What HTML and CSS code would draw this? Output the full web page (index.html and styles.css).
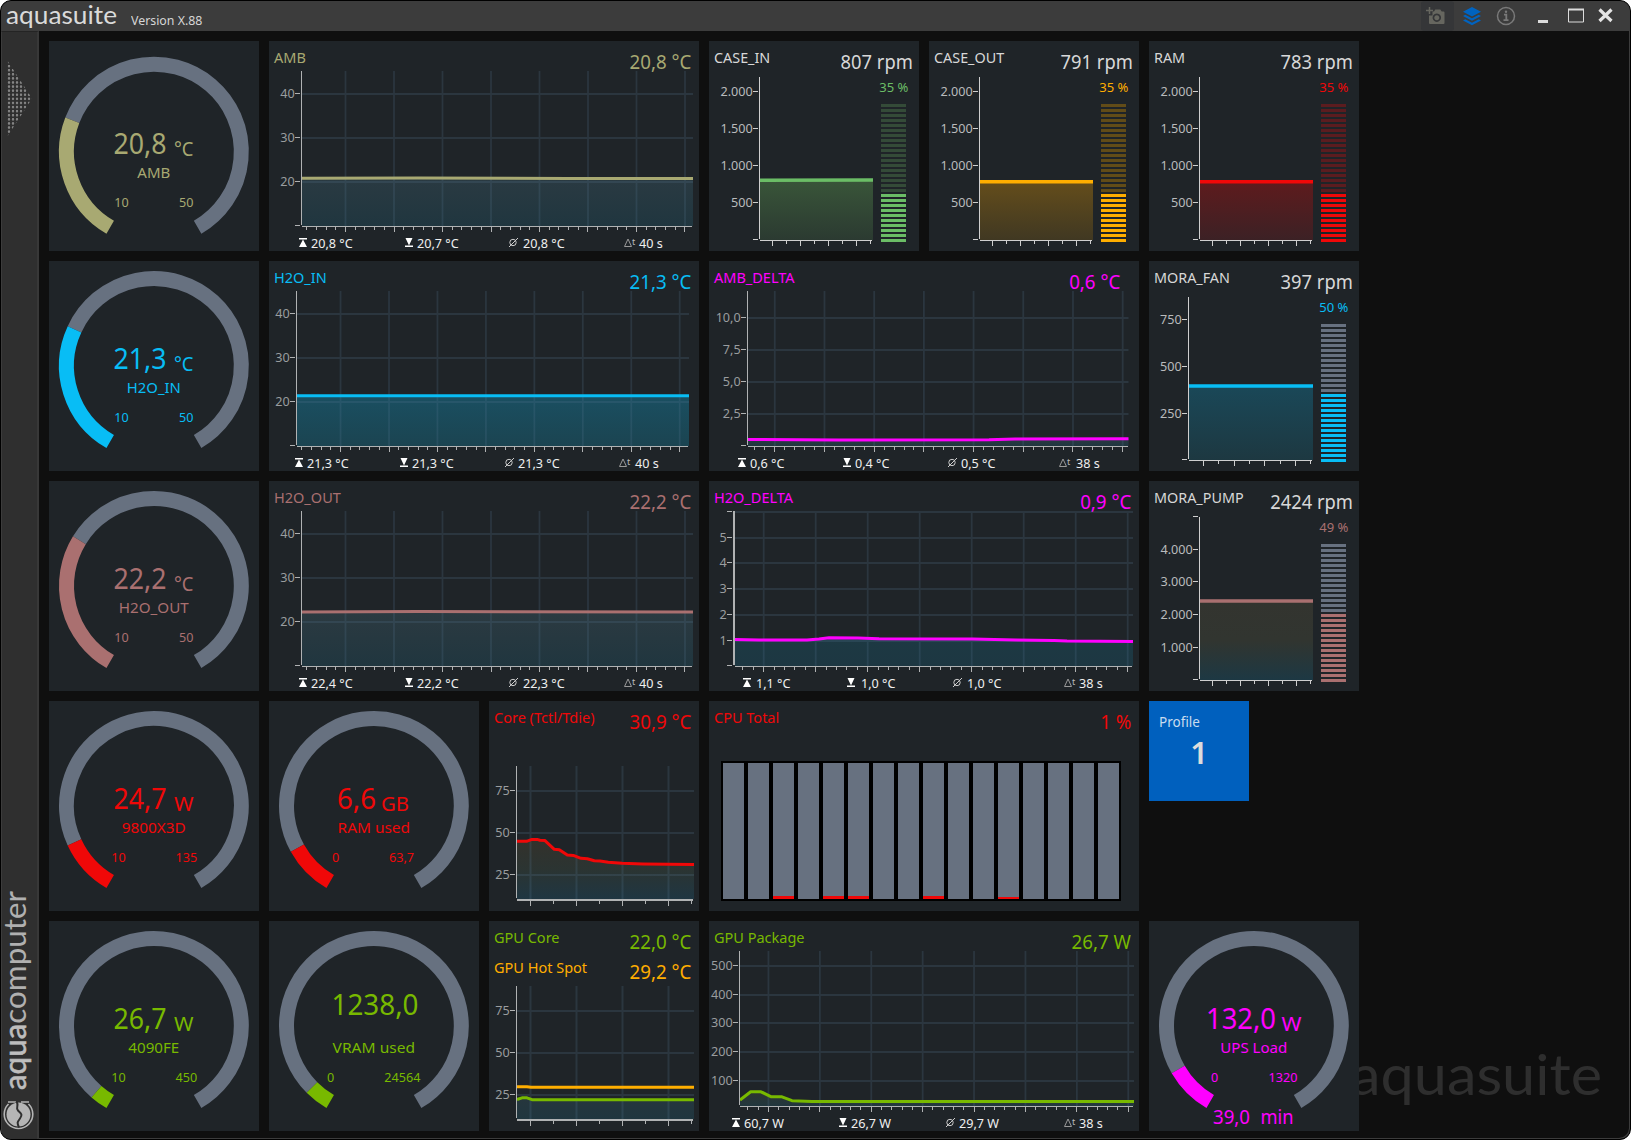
FILE: index.html
```html
<!DOCTYPE html>
<html lang="de">
<head>
    <meta charset="UTF-8">
    <meta name="viewport" content="width=device-width, initial-scale=1.0">
    <title>aquasuite</title>
    <link rel="stylesheet" href="styles.css">
</head>
<body>
    <div class="window">
        <header class="titlebar">
            <svg class="brand" width="118" height="30"><text x="5" y="22.5" textLength="111" lengthAdjust="spacingAndGlyphs">aquasuite</text></svg>
            <span class="version">Version X.88</span>
            <div class="tools">
                <span class="tool tool-active">
                    <svg width="20" height="18" viewBox="0 0 20 18"><path fill="#66665f" fill-rule="evenodd" d="M8 4.5 9.3 2.6h5L15.7 4.5H17.5a1 1 0 0 1 1 1V16a1 1 0 0 1-1 1H4a1 1 0 0 1-1-1V8.500H6.500V4.500ZM10.800 6.500a4.200 4.200 0 1 0 .01 0Zm0 1.700a2.500 2.500 0 1 1-.01 0Z"/><path stroke="#66665f" stroke-width="1.500" d="M3.500 0v7M0 3.500h7"/></svg>
                </span>
                <span class="tool">
                    <svg width="18" height="19" viewBox="0 0 18 19"><path fill="#0063c0" d="M9 0 18 4.700 9 9.400 0 4.700ZM0 9l2.300-1.200L9 11.300l6.700-3.500L18 9l-9 4.700ZM0 13.400l2.300-1.200L9 15.700l6.700-3.500L18 13.400 9 18.200Z"/></svg>
                </span>
                <span class="tool">
                    <svg width="20" height="20" viewBox="0 0 20 20"><circle cx="10" cy="10" r="8.500" fill="none" stroke="#797979" stroke-width="1.500"/><path fill="none" stroke="#797979" stroke-width="1.800" d="M8 8.600h2.300V14M7.500 14.200h5"/><circle cx="10" cy="5.700" r="1.200" fill="#797979"/></svg>
                </span>
                <span class="win-btn"><svg width="10" height="15"><rect y="12" width="10" height="3" fill="#dcdcdc"/></svg></span>
                <span class="win-btn"><svg width="16" height="15"><path fill="none" stroke="#dcdcdc" d="M.5 1.500h15v12.500H.5Z"/><path stroke="#dcdcdc" stroke-width="2" d="M0 1.500h16"/></svg></span>
                <span class="win-btn"><svg width="15" height="15"><path stroke="#e4e4e4" stroke-width="3.200" d="m1.500 1.500 12 11.500M13.500 1.500l-12 11.500"/></svg></span>
            </div>
        </header>

        <div class="main">
            <aside class="sidebar">
                <div class="handle"></div>
                <svg class="maker" width="35" height="248" viewBox="0 0 35 248">
                    <text transform="translate(23.500,199) rotate(-90)" textLength="199" lengthAdjust="spacingAndGlyphs"><tspan class="maker-bold">aqua</tspan>computer</text>
                    <circle cx="16.500" cy="223.500" r="12" fill="#b5b5b5"/>
                    <path fill="none" stroke="#b5b5b5" stroke-width="1.600" d="M6.500 213a14.300 14.300 0 1 0 20 0M6 211h8M19 211h8"/>
                    <path fill="none" stroke="#2f2f2f" stroke-width="2" d="M14 210.500c4 3-1 6 2 9s5 4 2 8-3 4-1 9"/>
                </svg>
            </aside>

            <main class="desk">
                <div class="watermark"><svg width="256" height="80"><text x="2" y="56" textLength="251" lengthAdjust="spacingAndGlyphs">aquasuite</text></svg></div>
                <div class="grid">
                    <section class="tile" data-gauge="amb"></section>
                    <section class="tile wide olive" data-chart="amb">
                        <div class="head"><span class="name">AMB</span><span class="value">20,8 °C</span></div>
                    </section>
                    <section class="tile green fan" data-chart="caseIn">
                        <div class="head"><span class="name">CASE_IN</span><span class="value">807 rpm</span></div>
                        <div class="power"><span class="percent">35 %</span><div class="bar dim"><div class="bar-fill" data-segments="10"></div></div></div>
                    </section>
                    <section class="tile orange fan" data-chart="caseOut">
                        <div class="head"><span class="name">CASE_OUT</span><span class="value">791 rpm</span></div>
                        <div class="power"><span class="percent">35 %</span><div class="bar dim"><div class="bar-fill" data-segments="10"></div></div></div>
                    </section>
                    <section class="tile red fan" data-chart="ram">
                        <div class="head"><span class="name">RAM</span><span class="value">783 rpm</span></div>
                        <div class="power"><span class="percent">35 %</span><div class="bar dim"><div class="bar-fill" data-segments="10"></div></div></div>
                    </section>

                    <section class="tile" data-gauge="h2oIn"></section>
                    <section class="tile wide cyan" data-chart="h2oIn">
                        <div class="head"><span class="name">H2O_IN</span><span class="value">21,3 °C</span></div>
                    </section>
                    <section class="tile wide magenta" data-chart="ambDelta">
                        <div class="head head-inset"><span class="name">AMB_DELTA</span><span class="value">0,6 °C</span></div>
                    </section>
                    <section class="tile cyan fan" data-chart="moraFan">
                        <div class="head"><span class="name">MORA_FAN</span><span class="value">397 rpm</span></div>
                        <div class="power"><span class="percent">50 %</span><div class="bar"><div class="bar-fill" data-segments="14"></div></div></div>
                    </section>

                    <section class="tile" data-gauge="h2oOut"></section>
                    <section class="tile wide rose" data-chart="h2oOut">
                        <div class="head"><span class="name">H2O_OUT</span><span class="value">22,2 °C</span></div>
                    </section>
                    <section class="tile wide magenta" data-chart="h2oDelta">
                        <div class="head"><span class="name">H2O_DELTA</span><span class="value">0,9 °C</span></div>
                    </section>
                    <section class="tile rose fan" data-chart="moraPump">
                        <div class="head"><span class="name">MORA_PUMP</span><span class="value">2424 rpm</span></div>
                        <div class="power"><span class="percent">49 %</span><div class="bar"><div class="bar-fill" data-segments="14"></div></div></div>
                    </section>

                    <section class="tile" data-gauge="cpu"></section>
                    <section class="tile" data-gauge="ramUsed"></section>
                    <section class="tile red" data-chart="core">
                        <div class="head"><span class="name">Core (Tctl/Tdie)</span><span class="value">30,9 °C</span></div>
                    </section>
                    <section class="tile wide red">
                        <div class="head"><span class="name">CPU Total</span><span class="value">1 %</span></div>
                        <div class="threads" id="threads"></div>
                    </section>
                    <section class="profile">
                        <span class="profile-label">Profile</span>
                        <strong class="profile-number">1</strong>
                    </section>

                    <section class="tile" data-gauge="gpu"></section>
                    <section class="tile" data-gauge="vram"></section>
                    <section class="tile lime" data-chart="gpuCore">
                        <div class="head"><span class="name">GPU Core</span><span class="value">22,0 °C</span></div>
                        <div class="head orange"><span class="name">GPU Hot Spot</span><span class="value">29,2 °C</span></div>
                    </section>
                    <section class="tile wide lime" data-chart="gpuPackage">
                        <div class="head"><span class="name">GPU Package</span><span class="value">26,7 W</span></div>
                    </section>
                    <section class="tile" data-gauge="ups"></section>
                </div>
            </main>
        </div>
    </div>
    <script src="script.js"></script>
</body>
</html>
```

FILE: styles.css
```css
* {
    box-sizing: border-box;
}

html {
    background-color: #fff;
}

body {
    margin: 0;
    font-family: "Noto Sans", "Open Sans", sans-serif;
    overflow: hidden;
}

.window {
    width: 1631px;
    height: 1140px;
    display: flex;
    flex-direction: column;
    background-color: #0f0f0f;
    border: 1px solid #000;
    border-radius: 11px;
    overflow: hidden;
    box-shadow: inset -1px -1px 0 #3c3c3c;
}

/* title bar */
.titlebar {
    height: 30px;
    flex: none;
    display: flex;
    align-items: flex-start;
    background-color: #3c3c3c;
    color: #d6d6d6;
}

.brand,
.maker,
.watermark svg {
    overflow: visible;
}

.brand text {
    font-family: Lato, sans-serif;
    font-size: 25px;
    fill: #dadada;
}

.version {
    margin-left: 12px;
    padding-top: 9px;
    font-size: 13.300px;
    line-height: 20px;
    transform: scaleX(0.93);
    transform-origin: left;
}

.tools {
    margin-left: auto;
    display: flex;
    align-items: center;
    height: 30px;
    padding-right: 17px;
}

.tool {
    display: flex;
    align-items: center;
    justify-content: center;
    width: 33px;
    height: 30px;
    margin-right: 1px;
}

.tool-active {
    background-color: #353638;
    border-radius: 3px;
}

.tool-active svg {
    margin-right: 3px;
}

.win-btn {
    display: flex;
    margin-left: 15px;
    margin-bottom: 2px;
}

.win-btn + .win-btn {
    margin-left: 20px;
}

.win-btn:last-child {
    margin-left: 14px;
}

.main {
    flex: 1;
    display: flex;
    min-height: 0;
}

/* side bar */
.sidebar {
    width: 38px;
    flex: none;
    display: flex;
    flex-direction: column;
    justify-content: space-between;
    background-color: #2f2f2f;
    border-top: 1px solid #242424;
    border-left: 1px solid #3c3c3c;
    border-right: 2px solid #383838;
}

.handle {
    width: 25px;
    height: 77px;
    margin: 28px 0 0 5px;
    background: radial-gradient(circle at 2px 2px, #858585 0.9px, transparent 1.600px) 0 0 / 4px 4.100px;
    clip-path: polygon(0 0, 100% 50%, 0 100%);
}

.maker text {
    font-family: Lato, sans-serif;
    font-size: 31px;
    fill: #b0b0b0;
}

.maker .maker-bold {
    fill: #bdbdbd;
    stroke: #bdbdbd;
    stroke-width: 0.6px;
}

/* desktop */
.desk {
    position: relative;
    flex: 1;
    padding: 10px;
}

.watermark {
    position: absolute;
    right: 25px;
    bottom: 15px;
}

.watermark text {
    font-family: Lato, sans-serif;
    font-size: 57px;
    fill: #2e2e2e;
}

.grid {
    position: relative;
    display: grid;
    grid-template-columns: repeat(6, 210px);
    grid-auto-rows: 210px;
    gap: 10px;
}

.tile {
    position: relative;
    background-color: #1f2428;
    color: var(--c);
}

.wide {
    grid-column: span 2;
}

.olive { --c: #a8a972; }
.green { --c: #6bbd66; --dim: #344b38; }
.orange { --c: #ffae00; --dim: #624c18; }
.red { --c: #f00808; --dim: #5b1c1f; }
.cyan { --c: #08bdf5; }
.magenta { --c: #ff00ff; }
.rose { --c: #aa7070; }
.lime { --c: #78b900; }

.head {
    display: flex;
    justify-content: space-between;
    height: 30px;
    padding: 0 8px 0 5px;
    white-space: nowrap;
    color: var(--c);
}

.head-inset {
    padding-right: 19px;
}

.name {
    font-size: 14.500px;
    line-height: 32px;
}

.value {
    font-size: 19.500px;
    line-height: 42px;
    transform: scaleX(0.96);
    transform-origin: right;
}

.fan .head {
    padding-right: 6px;
    color: #d8d8d8;
}

.fan .name {
    transform: scaleX(0.99);
    transform-origin: left;
}

.fan .value {
    transform: scaleX(0.94);
}

/* the plot covers the whole tile, below the captions */
.plot {
    position: absolute;
    inset: 0;
}

.plot text,
.gauge text {
    font-family: "Noto Sans", "Open Sans", sans-serif;
}

.axis-label {
    font-size: 13.300px;
    fill: #9a9d9f;
}

.fan .axis-label {
    fill: #b9bbbc;
}

.stat {
    font-size: 13.300px;
    fill: #f0f0f0;
}

.power {
    display: flex;
    flex-direction: column;
    align-items: center;
    width: 45px;
    margin: 5px 3px 0 auto;
}

.percent {
    font-size: 13.300px;
    line-height: 23px;
    height: 28px;
    white-space: nowrap;
    transform: scaleX(0.98);
}

.bar {
    display: flex;
    align-items: flex-end;
    width: 25px;
    height: 138px;
    background: repeating-linear-gradient(to bottom, #677180 0 3px, transparent 3px 5px);
}

.bar.dim {
    background: repeating-linear-gradient(to bottom, var(--dim) 0 3px, transparent 3px 5px);
}

.bar-fill {
    width: 100%;
    background: repeating-linear-gradient(to bottom, var(--c) 0 3px, #1f2428 3px 5px);
}

/* cpu threads */
.threads {
    display: flex;
    gap: 4px;
    width: 400px;
    height: 140px;
    margin: 30px 0 0 12px;
    padding: 2px;
    background-color: #000;
}

.thread {
    flex: 1;
    display: flex;
    align-items: flex-end;
    background-color: #677180;
}

.thread-load {
    width: 100%;
    background-color: #f00808;
}

.profile {
    display: flex;
    flex-direction: column;
    width: 100px;
    height: 100px;
    padding: 9px 10px;
    background-color: #0060be;
}

.profile-label {
    font-size: 13.500px;
    line-height: 24px;
    color: #c9dcef;
}

.profile-number {
    font-size: 31px;
    font-weight: 600;
    line-height: 36px;
    text-align: center;
    color: #dcdcdc;
}
```

FILE: script.js
```js
const COLORS = {
    olive: '#a8a972', green: '#6bbd66', orange: '#ffae00', red: '#f00808',
    cyan: '#08bdf5', magenta: '#ff00ff', rose: '#aa7070', lime: '#78b900'
};
const BLUE = ['#2a3a42', '#20363f'];
const WARM = ['#33342f', '#313530', '#1d3843'];
const CONDENSE = 0.95;

function text(x, y, str, attrs, width) {
    if (width) {
        return `<text x="${x}" y="${y}" textLength="${width}" lengthAdjust="spacingAndGlyphs" ${attrs}>${str}</text>`;
    }
    return `<text transform="translate(${x},${y}) scale(${CONDENSE},1)" ${attrs}>${str}</text>`;
}

// ---------- gauges ----------

const gauges = {
    amb: { color: 'olive', part: 0.27, top: 5, value: ['20,8', 64.5, 53], unit: ['°C', 125, 19.5], name: ['AMB', 33], range: [['10', 72.5], ['50', 137.3]] },
    h2oIn: { color: 'cyan', part: 0.2825, value: ['21,3', 64.5, 53], unit: ['°C', 125, 19.5], name: ['H2O_IN', 54], range: [['10', 72.5], ['50', 137.3]] },
    h2oOut: { color: 'rose', part: 0.305, value: ['22,2', 64.5, 53], unit: ['°C', 125, 19.5], name: ['H2O_OUT', 70], range: [['10', 72.5], ['50', 137.3]] },
    cpu: { color: 'red', part: 0.1176, value: ['24,7', 64.5, 53], unit: ['W', 125, 19.5], name: ['9800X3D', 64], range: [['10', 69.5], ['135', 137.3]] },
    ramUsed: { color: 'red', part: 0.1036, value: ['6,6', 68, 39], unit: ['GB', 112, 28], name: ['RAM used', 72.5], range: [['0', 66.5], ['63,7', 132.5]] },
    gpu: { color: 'lime', part: 0.037, value: ['26,7', 64.5, 53], unit: ['W', 125, 19.5], name: ['4090FE', 51], range: [['10', 69.5], ['450', 137.3]] },
    vram: { color: 'lime', part: 0.0504, value: ['1238,0', 62.5, 87, 94], name: ['VRAM used', 82.5], range: [['0', 61.7], ['24564', 133.3]] },
    ups: { color: 'magenta', part: 0.1, value: ['132,0', 57, 70], unit: ['W', 132.5, 20], name: ['UPS Load', 67], range: [['0', 65.7], ['1320', 134]], extra: ['39,0', 'min'] }
};

function arc(cy, from, to) {
    const r = 87.4;
    const p = deg => {
        const a = (120 + deg) * Math.PI / 180;
        return (104.9 + r * Math.cos(a)).toFixed(2) + ' ' + (cy + r * Math.sin(a)).toFixed(2);
    };
    return `M${p(from)}A${r} ${r} 0 ${to - from > 180 ? 1 : 0} 1 ${p(to)}`;
}

function drawGauge(el) {
    const g = gauges[el.dataset.gauge];
    const top = g.top || 0;
    const cy = top ? 110.6 : 104.9;
    const split = g.part * 300;
    let out = `<path d="${arc(cy, split, 300)}" fill="none" stroke="#677180" stroke-width="15"/>`;
    out += `<path d="${arc(cy, 0, split)}" fill="none" stroke="${COLORS[g.color]}" stroke-width="15"/>`;
    out += text(g.value[1], (g.value[3] || 108) + top, g.value[0], 'font-size="29"', g.value[2]);
    if (g.unit) {
        out += text(g.unit[1], 109.5 + top, g.unit[0], 'font-size="20.5"', g.unit[2]);
    }
    out += text(104.8 - g.name[1] / 2, 131.5 + top, g.name[0], 'font-size="14.8"', g.name[1]);
    g.range.forEach(([label, x]) => {
        out += text(x, 161 + top, label, 'font-size="13.3" text-anchor="middle"');
    });
    if (g.extra) {
        out += text(64, 203, g.extra[0], 'font-size="19.5"', 37);
        out += text(111.5, 203, g.extra[1], 'font-size="19.5"', 33);
    }
    el.innerHTML = `<svg class="gauge" width="210" height="210" fill="${COLORS[g.color]}">${out}</svg>`;
}

// ---------- charts ----------

const scale40 = [[52, '40'], [96, '30'], [140, '20'], [184, '']];
const fanScale = [[50, '2.000'], [87, '1.500'], [124, '1.000'], [161, '500'], [198, '']];
const coreScale = [[89, '75'], [131, '50'], [173, '25']];

const wide = { top: 30, base: 185, grid: true, line: 3 };
const fan = { top: 36, base: 199, x0: 50, x1: 164, ticks: [63.5, 14, 0, 2], line: 3.4 };
const small = { top: 65, base: 198, heavy: 2, grid: true, x0: 27, x1: 205, y: coreScale, ticks: [41.5, 23, 0, 2], line: 3 };

const charts = {
    amb: { ...wide, x0: 32, x1: 424, y: scale40, ticks: [37.7, 9.7, 4, 5], fill: BLUE,
        lines: [['olive', [[33, 137.2], [150, 137], [300, 137.4], [424, 137.4]]]],
        stats: [['20,8 °C', 30, 42], ['20,7 °C', 136, 148], ['20,8 °C', 240, 254], ['40 s', 355, 370]] },
    h2oIn: { ...wide, x0: 27, x1: 420, y: scale40, ticks: [32.8, 9.69, 4, 5], fill: ['#1a4f61', '#1b4451'],
        lines: [['cyan', [[28, 134.8], [420, 134.8]]]],
        stats: [['21,3 °C', 26, 38], ['21,3 °C', 131, 143], ['21,3 °C', 236, 249], ['40 s', 350, 366]] },
    h2oOut: { ...wide, x0: 32, x1: 424, y: scale40, ticks: [37.7, 9.7, 4, 5], fill: ['#2c3a41', '#20363f'],
        lines: [['rose', [[33, 131], [150, 130.6], [424, 131]]]],
        stats: [['22,4 °C', 30, 42], ['22,2 °C', 136, 148], ['22,3 °C', 240, 254], ['40 s', 355, 370]] },
    ambDelta: { ...wide, x0: 38, x1: 419.5, ticks: [45.9, 9.94, 2, 5], fill: BLUE,
        y: [[56, '10,0'], [88, '7,5'], [120, '5,0'], [152, '2,5'], [184, '']],
        lines: [['magenta', [[39, 178.4], [130, 179], [280, 178.8], [306, 177.9], [419.5, 177.7]]]],
        stats: [['0,6 °C', 29, 41], ['0,4 °C', 134, 146], ['0,5 °C', 239, 252], ['38 s', 350, 367]] },
    h2oDelta: { ...wide, x0: 24, x1: 424, axis: 2, ticks: [33.9, 10.4, 2, 5], fill: ['#1d3943', '#1d3742'],
        y: [[30, ''], [56, '5'], [81, '4'], [107, '3'], [133, '2'], [159, '1'], [184, '']],
        lines: [['magenta', [[26, 158.4], [50, 159], [98, 159], [110, 158], [120, 156.8], [149, 157], [170, 157.8], [264, 158.1], [307, 159], [345, 159.4], [358, 160.1], [424, 160.5]]]],
        stats: [['1,1 °C', 34, 47], ['1,0 °C', 138, 152], ['1,0 °C', 244, 258], ['38 s', 355, 370]] },
    gpuPackage: { ...wide, x0: 30, x1: 425, ticks: [38.9, 10.28, 2, 5], fill: ['#2d3430', '#22373e'],
        y: [[44, '500'], [73, '400'], [101, '300'], [130, '200'], [159, '100']],
        lines: [['lime', [[31, 179], [41.7, 170.8], [52, 170.8], [62.3, 175.8], [73, 175.8], [83, 179.7], [103, 180.4], [425, 180.5]]]],
        stats: [['60,7 W', 23, 35], ['26,7 W', 130, 142], ['29,7 W', 237, 250], ['38 s', 355, 370]] },
    core: { ...small, fill: ['#33312b', '#2b3432', '#1f3642'],
        lines: [['red', [[28, 140.3], [37.5, 140.3], [43, 138.4], [48, 138.4], [51, 139.3], [56, 139.6], [65.3, 148.3], [70.3, 148.7], [78.3, 154], [84.3, 154.4], [92, 157.3], [98.3, 157.7], [105.3, 159.7], [111, 160], [119.3, 161.3], [133, 162.3], [154, 163], [205, 163.6]]]] },
    gpuCore: { ...small, fill: ['#26363d', '#20363f'],
        lines: [['lime', [[28, 178.5], [33, 176.8], [38, 176.8], [43, 178.7], [205, 178.7]]],
            ['orange', [[28, 165.8], [38, 165.8], [42, 166.3], [205, 166.3]]]] },
    caseIn: { ...fan, y: fanScale, fill: ['#395539', '#2b3a31'], lines: [['green', [[51, 139.2], [164, 139]]]] },
    caseOut: { ...fan, y: fanScale, fill: ['#644d1b', '#403822'], lines: [['orange', [[51, 140.7], [164, 140.7]]]] },
    ram: { ...fan, y: fanScale, fill: ['#5e1b1d', '#3c2125'], lines: [['red', [[51, 140.7], [164, 140.7]]]] },
    moraFan: { ...fan, x0: 39, ticks: [54.5, 15.3, 0, 2], y: [[58, '750'], [105, '500'], [152, '250'], [198, '']],
        fill: ['#1a4858', '#1d3841'], lines: [['cyan', [[40, 125], [164, 125]]]] },
    moraPump: { ...fan, y: [[35, ''], [68, '4.000'], [100, '3.000'], [133, '2.000'], [166, '1.000'], [198, '']],
        fill: WARM, lines: [['rose', [[51, 120], [164, 120]]]] }
};

const statIcons = [
    '<path fill="#fff" d="M0-9h8v1.500H0ZM4-7.500 8 0H0Z"/>',
    '<path fill="#fff" d="M0-1.500h8V0H0ZM4-1.500 .5-9h7Z"/>',
    '<g fill="none" stroke="#ccc"><circle cx="4" cy="-4.500" r="3.200"/><path d="M0 0 9-9"/></g>',
    '<path fill="none" stroke="#999" d="M.5-.5 4-8 7.500-.5Z"/><text x="8" y="-2.500" font-size="9" fill="#bbb">t</text>'
];

function drawChart(el) {
    const key = el.dataset.chart;
    const c = charts[key];
    const w = el.classList.contains('wide') ? 430 : 210;
    const axisColor = el.classList.contains('fan') ? '#cfcfcf' : '#b0b2b3';
    const heavy = c.heavy || 1;
    const axis = c.axis || 1;
    const left = c.x0 + axis;
    let out = '';

    // time axis
    const [start, step, first, every] = c.ticks;
    const xs = [];
    for (let i = 0, x = start; x < c.x1; i++, x = start + i * step) {
        xs.push([x, (i - first) % every === 0]);
    }

    // filled area below the first line
    const pts = c.lines[0][1];
    const area = `M${left} ${c.base}L${pts.map(p => p.join(' ')).join('L')}L${c.x1} ${c.base}Z`;
    const stops = c.fill.map((col, i) => `<stop offset="${i / (c.fill.length - 1)}" stop-color="${col}"/>`).join('');
    out += `<linearGradient id="fill-${key}" x2="0" y2="1">${stops}</linearGradient><path d="${area}" fill="url(#fill-${key})"/>`;

    if (c.grid) {
        let grid = '';
        c.y.forEach(([y]) => {
            if (y < c.base - 2) grid += `M${left} ${y + 1}H${c.x1}`;
        });
        xs.forEach(([x, major]) => {
            if (major) grid += `M${x} ${c.top}V${c.base}`;
        });
        out += `<path d="${grid}" stroke="#587890" stroke-opacity=".22" stroke-width="${c.heavy ? 2 : 1.8}"/>`;
    }

    c.lines.forEach(([color, p]) => {
        out += `<path d="M${p.map(q => q.join(' ')).join('L')}" fill="none" stroke="${COLORS[color]}" stroke-width="${c.line}" stroke-linejoin="round"/>`;
    });

    out += `<g fill="${axisColor}" shape-rendering="crispEdges">`;
    out += `<rect x="${c.x0}" y="${c.top}" width="${axis}" height="${c.base - c.top - 1}"/>`;
    out += `<rect x="${left}" y="${c.base}" width="${c.x1 - left - 1}" height="${heavy}"/>`;
    xs.forEach(([x, major]) => {
        out += `<rect x="${Math.floor(x)}" y="${c.base + heavy}" width="1" height="${major ? 5 : 3}"/>`;
    });
    c.y.forEach(([y]) => {
        out += `<rect x="${c.x0 - 6}" y="${Math.round(y)}" width="5" height="1"/>`;
    });
    out += '</g>';

    c.y.forEach(([y, label]) => {
        if (label) out += text(c.x0 - 6.3, y + 4.7, label, 'class="axis-label" text-anchor="end"');
    });

    (c.stats || []).forEach(([label, iconX, textX], i) => {
        out += `<g transform="translate(${iconX},206)">${statIcons[i]}</g>`;
        out += text(textX, 207, label, 'class="stat"');
    });

    el.insertAdjacentHTML('beforeend', `<svg class="plot" width="${w}" height="210">${out}</svg>`);
}

document.querySelectorAll('[data-gauge]').forEach(drawGauge);
document.querySelectorAll('[data-chart]').forEach(drawChart);

document.querySelectorAll('.bar-fill').forEach(el => {
    el.style.height = (el.dataset.segments * 5 - 2) + 'px';
});

// load per thread, in pixels of the bar
const load = [0, 0, 3, 0, 3, 3, 0, 0, 3, 0, 0, 2, 0, 0, 0, 0];
document.getElementById('threads').innerHTML = load.map(px =>
    `<div class="thread"><div class="thread-load" style="height: ${px}px"></div></div>`
).join('');
```
